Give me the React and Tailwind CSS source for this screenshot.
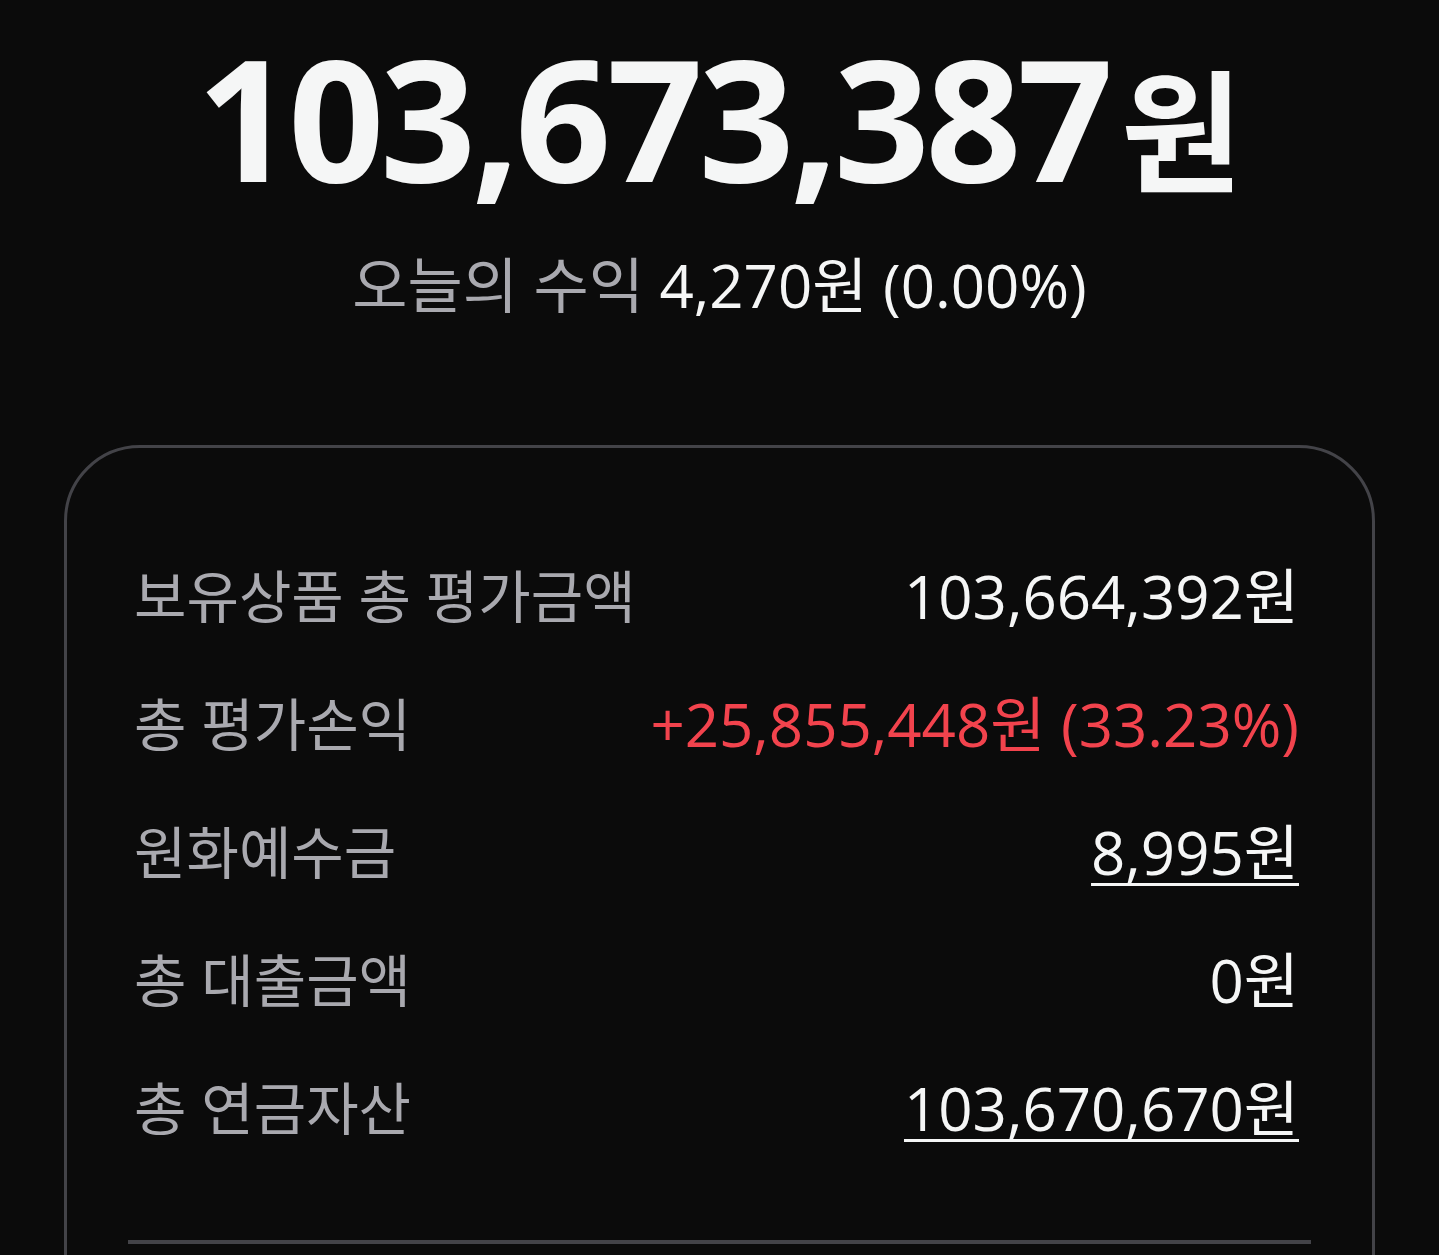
import React from "react";

const font = { fontFamily: '"Open Sans", "Noto Sans CJK KR", sans-serif' };

const rows = [
  { label: "보유상품 총 평가금액", value: "103,664,392원" },
  { label: "총 평가손익", value: "+25,855,448원 (33.23%)", tone: "up" },
  { label: "원화예수금", value: "8,995원", link: true },
  { label: "총 대출금액", value: "0원" },
  { label: "총 연금자산", value: "103,670,670원", link: true },
];

function Row({ label, value, tone, link }) {
  return (
    <div className="flex h-[128px] items-center justify-between pl-[6px] pr-[12px]">
      <span className="text-[57px] leading-none text-[#a9a9af]">{label}</span>
      <span
        className={
          "text-[60px] leading-none " +
          (tone === "up" ? "text-[#f2434d]" : "text-[#f5f6f6]") +
          (link ? " underline decoration-[3px] underline-offset-[8px]" : "")
        }
      >
        {value}
      </span>
    </div>
  );
}

export default function App() {
  return (
    <div className="min-h-screen overflow-hidden bg-[#0b0b0b]" style={font}>
      {/* total balance */}
      <div className="flex flex-col items-center pt-[33px]">
        <div className="flex items-baseline text-[168px] font-bold leading-none tracking-[-0.026em] text-[#f5f6f6]">
          103,673,387<span className="ml-[12px] text-[132px] tracking-normal">원</span>
        </div>
        <div className="mt-[54px] text-[60px] leading-none">
          <span className="text-[#a9a9af]">오늘의 수익 </span>
          <span className="text-[#f5f6f6]">4,270원 (0.00%)</span>
        </div>
      </div>

      {/* account summary card */}
      <div className="mx-[64px] mt-[130px] h-[900px] rounded-[76px] border-[3px] border-[#434348] px-[61px] pt-[84px]">
        {rows.map((r) => (
          <Row key={r.label} {...r} />
        ))}
        <div className="mt-[68px] h-[4px] bg-[#434348]" />
      </div>
    </div>
  );
}
